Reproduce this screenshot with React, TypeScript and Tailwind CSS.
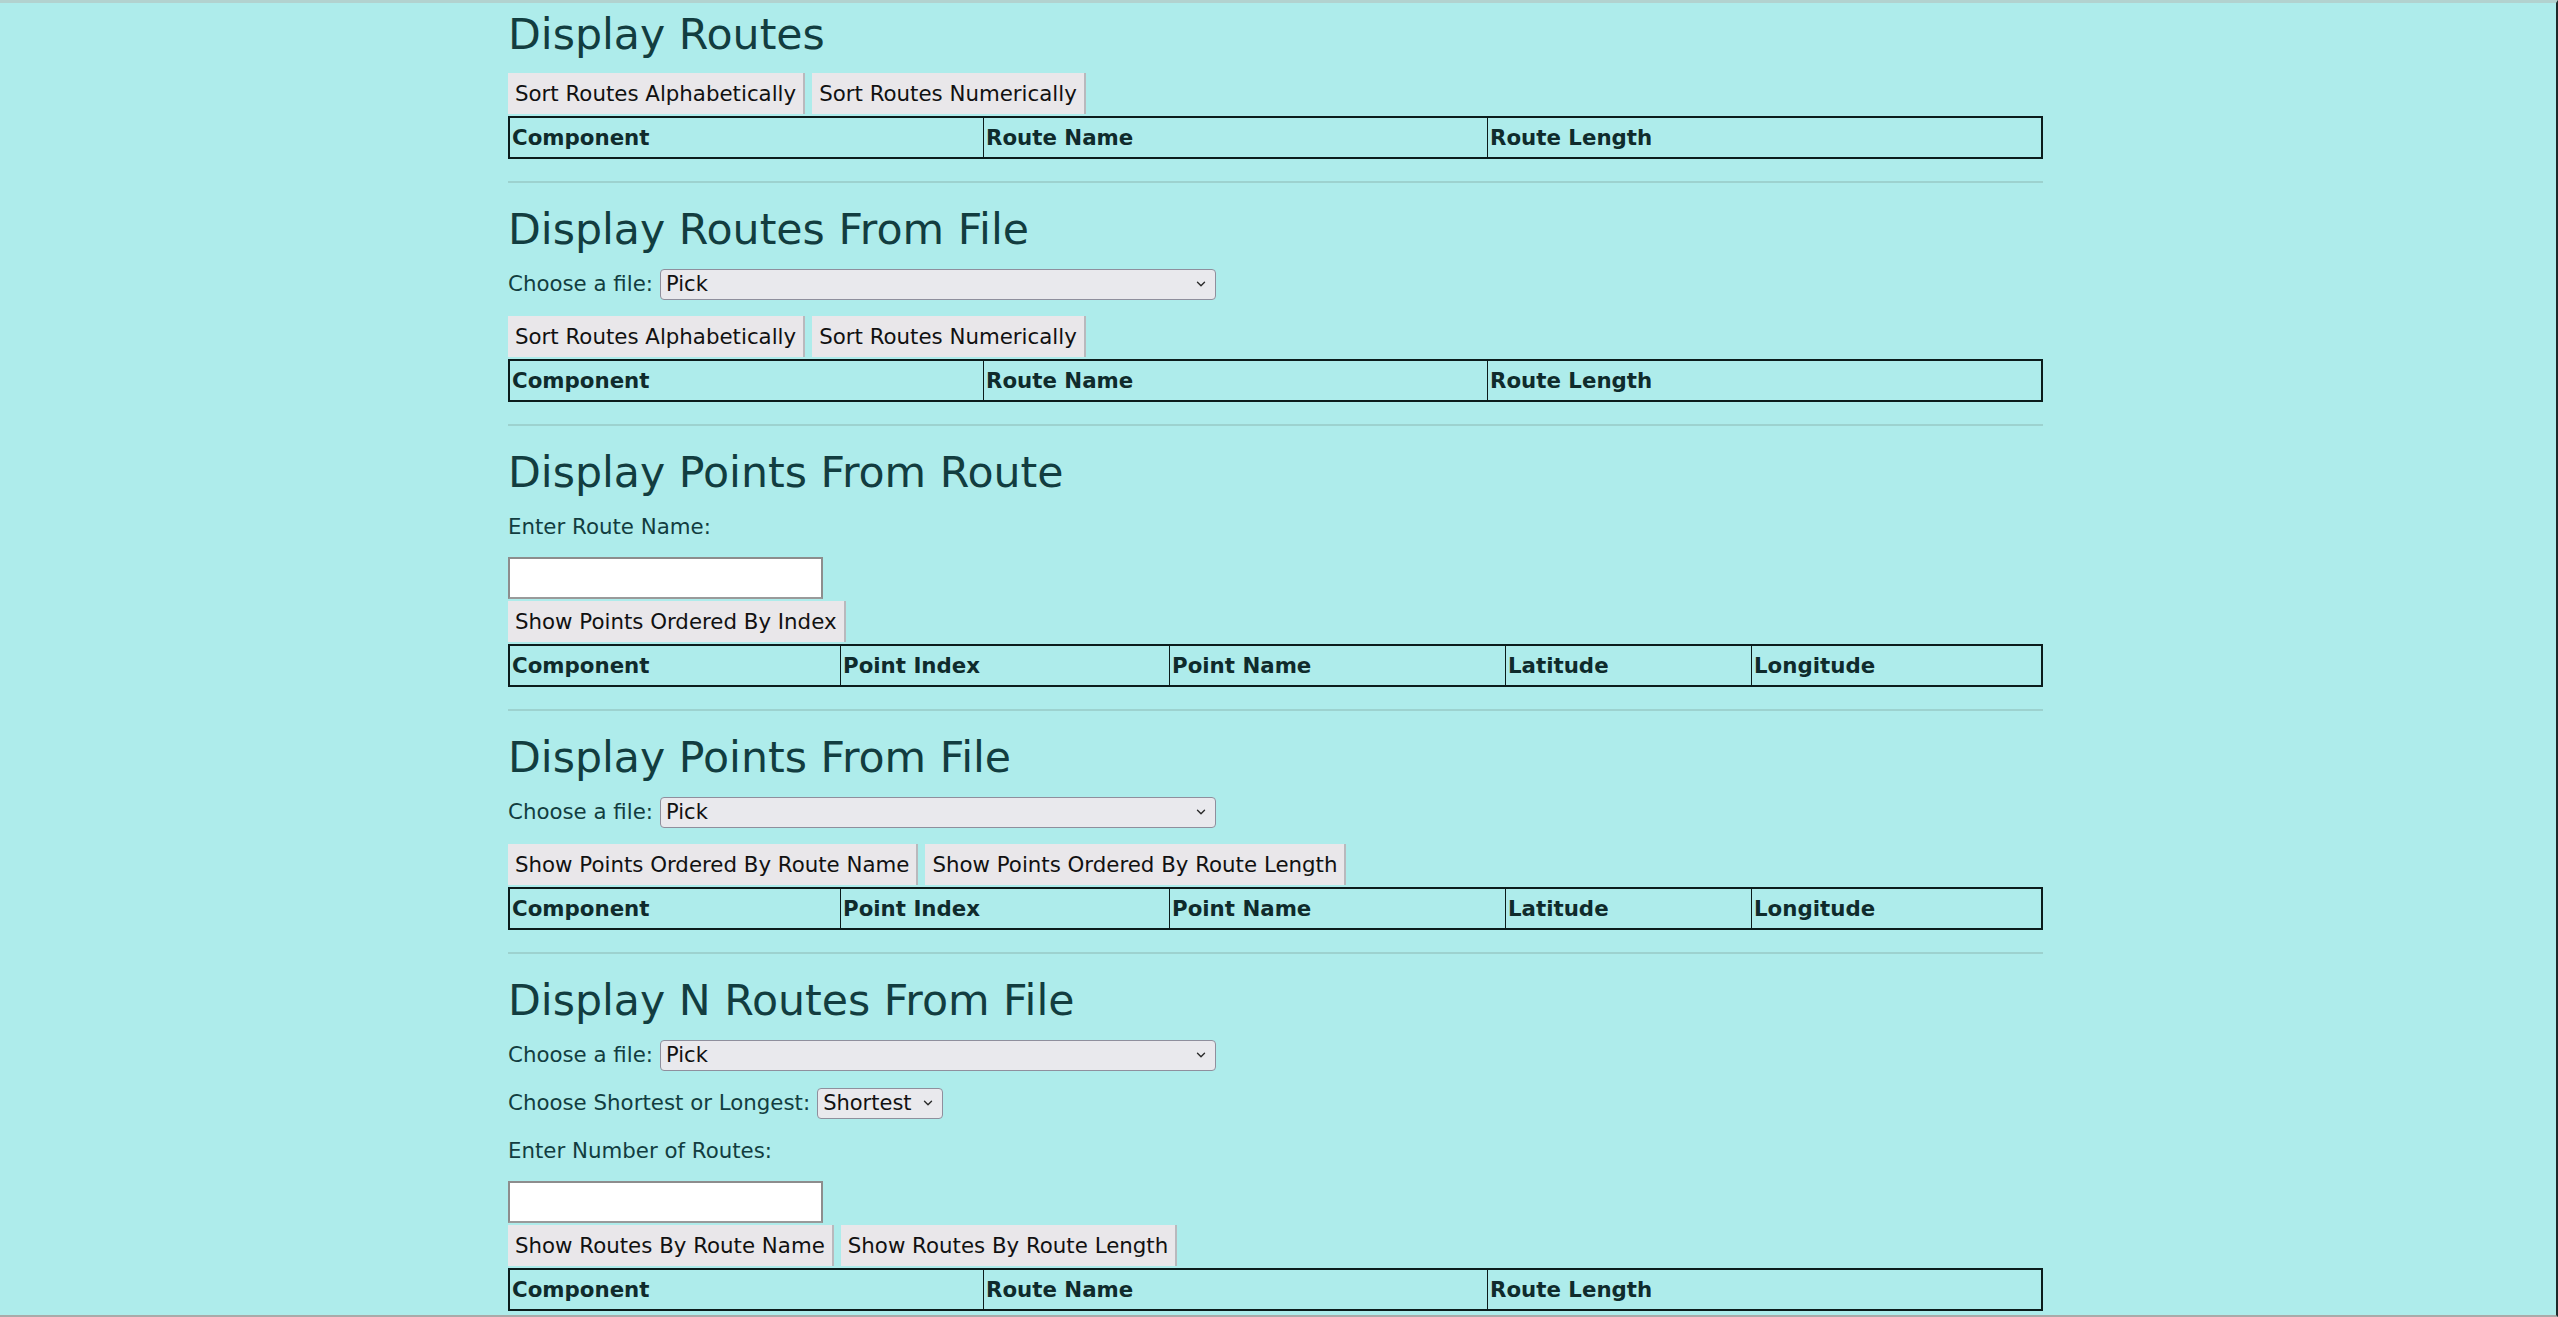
import { ChevronDown } from "lucide-react";

const routeCols = [
  { name: "Component", width: "w-[473px]" },
  { name: "Route Name", width: "w-[504px]" },
  { name: "Route Length", width: "w-[554px]" },
];

const pointCols = [
  { name: "Component", width: "w-[330px]" },
  { name: "Point Index", width: "w-[329px]" },
  { name: "Point Name", width: "w-[336px]" },
  { name: "Latitude", width: "w-[246px]" },
  { name: "Longitude", width: "w-[290px]" },
];

const Title: React.FC<{ text: string }> = ({ text }) => (
  <h2 className="text-[42.67px] leading-[50px] mb-[14px] text-[#123d40]">{text}</h2>
);

const Btn: React.FC<{ label: string }> = ({ label }) => (
  <button className="h-[41px] px-[7px] bg-[#e9e7ea] border-r-2 border-[#b9b9bd] text-[21.33px] leading-none text-[#111]">
    {label}
  </button>
);

const Buttons: React.FC<{ labels: string[] }> = ({ labels }) => (
  <div className="flex flex-row gap-[7px]">
    {labels.map((l) => (
      <Btn key={l} label={l} />
    ))}
  </div>
);

const Table: React.FC<{ cols: { name: string; width: string }[] }> = ({ cols }) => (
  <table className="mt-[2px] w-[1535px] table-fixed border-separate border-spacing-0 border-2 border-[#0b1c1c]">
    <colgroup>
      {cols.map((c) => (
        <col key={c.name} className={c.width} />
      ))}
    </colgroup>
    <thead>
      <tr>
        {cols.map((c, i) => (
          <th
            key={c.name}
            className={`h-[39px] p-0 pl-[2px] text-left align-middle font-bold text-[21.33px] text-[#0f2b2c] ${
              i > 0 ? "border-l border-[#0b1c1c]" : ""
            }`}
          >
            {c.name}
          </th>
        ))}
      </tr>
    </thead>
  </table>
);

const Select: React.FC<{ value: string; width: string }> = ({ value, width }) => (
  <div className={`relative inline-block ${width}`}>
    <select
      className="w-full h-[31px] appearance-none rounded-[4px] border border-[#8f8f9d] bg-[#e9e9ed] pl-[5px] text-[21px] leading-none text-[#111]"
      defaultValue={value}
    >
      <option>{value}</option>
    </select>
    <ChevronDown
      size={14}
      strokeWidth={2.4}
      className="absolute right-[8px] top-[9px] text-[#2a2a2a] pointer-events-none"
    />
  </div>
);

const Row: React.FC<{ children: React.ReactNode }> = ({ children }) => (
  <div className="h-[31px] mb-[17px] flex flex-row items-center gap-[7px]">{children}</div>
);

const Label: React.FC<{ text: string }> = ({ text }) => (
  <div className="h-[31px] mb-[15px] flex flex-row items-center">{text}</div>
);

const Divider = () => <div className="mt-[22px] mb-[21px] h-[2px] bg-[#9dd2cf]" />;

const TextInput = () => (
  <input
    type="text"
    className="block w-[315px] h-[42px] mb-[2px] bg-white border-2 border-[#8d8d8d] border-b-[#9a9a9a]"
  />
);

export default function App() {
  return (
    <div className="h-[1317px] overflow-hidden bg-[#aeeceb] border-t-[3px] border-t-[#b2d2cf] border-b-2 border-b-[#a9aaa9] border-r-2 border-r-[#1c2a2a] font-['DejaVu_Sans',sans-serif] text-[21.33px] text-[#123d40]">
      <div className="ml-[508px] w-[1535px] pt-[6px]">
        <section>
          <Title text="Display Routes" />
          <Buttons labels={["Sort Routes Alphabetically", "Sort Routes Numerically"]} />
          <Table cols={routeCols} />
          <Divider />
        </section>

        <section>
          <Title text="Display Routes From File" />
          <Row>
            <span>Choose a file:</span>
            <Select value="Pick" width="w-[556px]" />
          </Row>
          <Buttons labels={["Sort Routes Alphabetically", "Sort Routes Numerically"]} />
          <Table cols={routeCols} />
          <Divider />
        </section>

        <section>
          <Title text="Display Points From Route" />
          <Label text="Enter Route Name:" />
          <TextInput />
          <Buttons labels={["Show Points Ordered By Index"]} />
          <Table cols={pointCols} />
          <Divider />
        </section>

        <section>
          <Title text="Display Points From File" />
          <Row>
            <span>Choose a file:</span>
            <Select value="Pick" width="w-[556px]" />
          </Row>
          <Buttons
            labels={["Show Points Ordered By Route Name", "Show Points Ordered By Route Length"]}
          />
          <Table cols={pointCols} />
          <Divider />
        </section>

        <section>
          <Title text="Display N Routes From File" />
          <Row>
            <span>Choose a file:</span>
            <Select value="Pick" width="w-[556px]" />
          </Row>
          <Row>
            <span>Choose Shortest or Longest:</span>
            <Select value="Shortest" width="w-[126px]" />
          </Row>
          <Label text="Enter Number of Routes:" />
          <TextInput />
          <Buttons labels={["Show Routes By Route Name", "Show Routes By Route Length"]} />
          <Table cols={routeCols} />
        </section>
      </div>
    </div>
  );
}
